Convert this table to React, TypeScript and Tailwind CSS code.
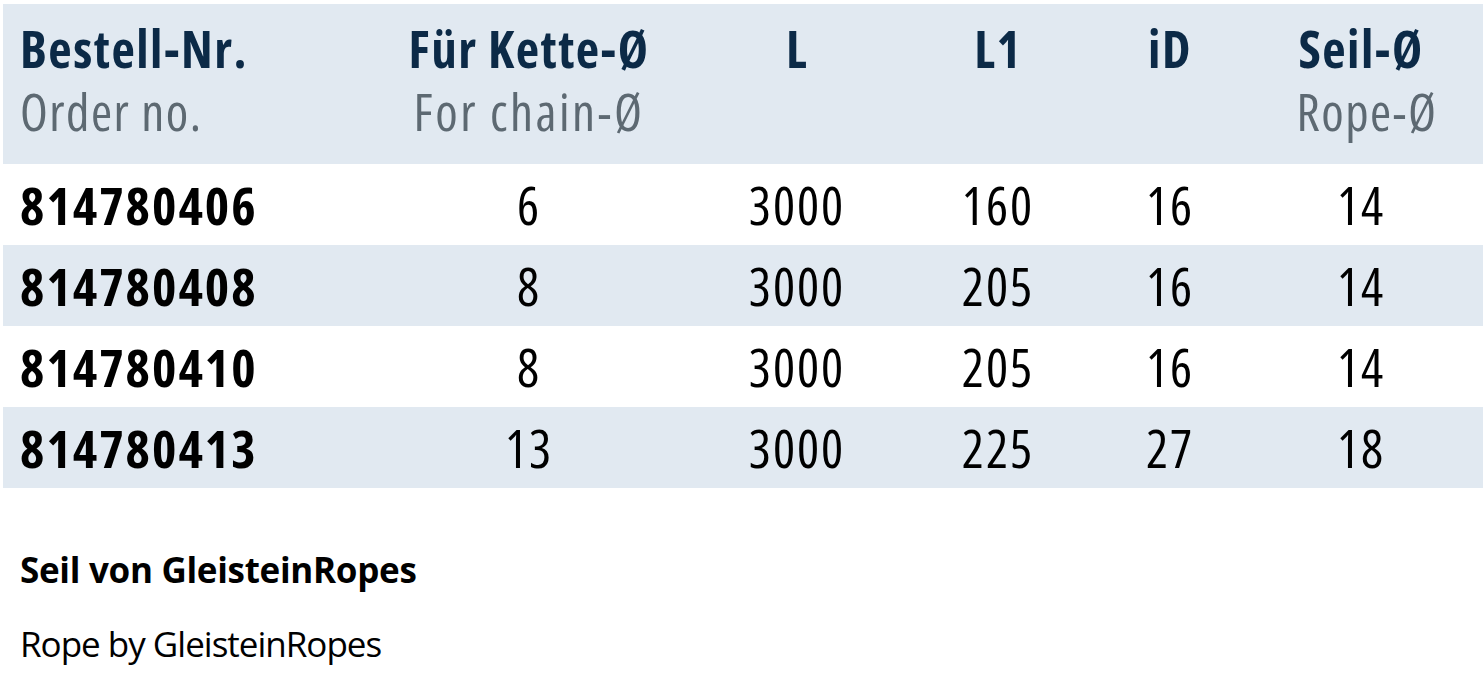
const rows = [
  { nr: "814780406", chain: "6", l: "3000", l1: "160", id: "16", rope: "14" },
  { nr: "814780408", chain: "8", l: "3000", l1: "205", id: "16", rope: "14" },
  { nr: "814780410", chain: "8", l: "3000", l1: "205", id: "16", rope: "14" },
  { nr: "814780413", chain: "13", l: "3000", l1: "225", id: "27", rope: "18" },
];

const cols = "grid grid-cols-[392px_268px_268px_134px_210px_172px_1fr]";

export default function App() {
  return (
    <div className="min-h-screen bg-white font-['Open_Sans',sans-serif] text-black">
      <div className="ml-[3px] pt-[4px] font-stretch-semi-condensed whitespace-nowrap">
        {/* header */}
        <div className={`${cols} h-[160px] bg-[#e1e9f1] pt-[13px] text-[51px] leading-[63px] tracking-[1.5px]`}>
          <div className="flex flex-col pl-[17px]">
            <span className="font-bold text-[#0c2a47]">Bestell-Nr.</span>
            <span className="text-[#5d6972]">Order no.</span>
          </div>
          <div className="flex flex-col items-center">
            <span className="font-bold text-[#0c2a47]">Für Kette-Ø</span>
            <span className="tracking-[2.5px] text-[#5d6972]">For chain-Ø</span>
          </div>
          <div className="text-center font-bold text-[#0c2a47]">L</div>
          <div className="text-center font-bold text-[#0c2a47]">L1</div>
          <div className="text-center font-bold text-[#0c2a47]">iD</div>
          <div className="flex flex-col items-center">
            <span className="font-bold text-[#0c2a47]">Seil-Ø</span>
            <span className="pl-[12px] text-[#5d6972]">Rope-Ø</span>
          </div>
          <div />
        </div>

        {/* body */}
        {rows.map((r, i) => (
          <div
            key={r.nr}
            className={`${cols} h-[81px] items-center text-[52px] tracking-[2px] ${i % 2 === 1 ? "bg-[#e1e9f1]" : "bg-white"}`}
          >
            <div className="pl-[17px] font-bold">{r.nr}</div>
            <div className="text-center">{r.chain}</div>
            <div className="text-center">{r.l}</div>
            <div className="text-center">{r.l1}</div>
            <div className="text-center">{r.id}</div>
            <div className="text-center">{r.rope}</div>
            <div />
          </div>
        ))}
      </div>

      {/* note */}
      <div className="flex flex-col gap-[28px] pl-[20px] pt-[59px] text-[35px] leading-[46px]">
        <span className="font-bold tracking-[-0.3px]">Seil von GleisteinRopes</span>
        <span className="tracking-[-1px]">Rope by GleisteinRopes</span>
      </div>
    </div>
  );
}
